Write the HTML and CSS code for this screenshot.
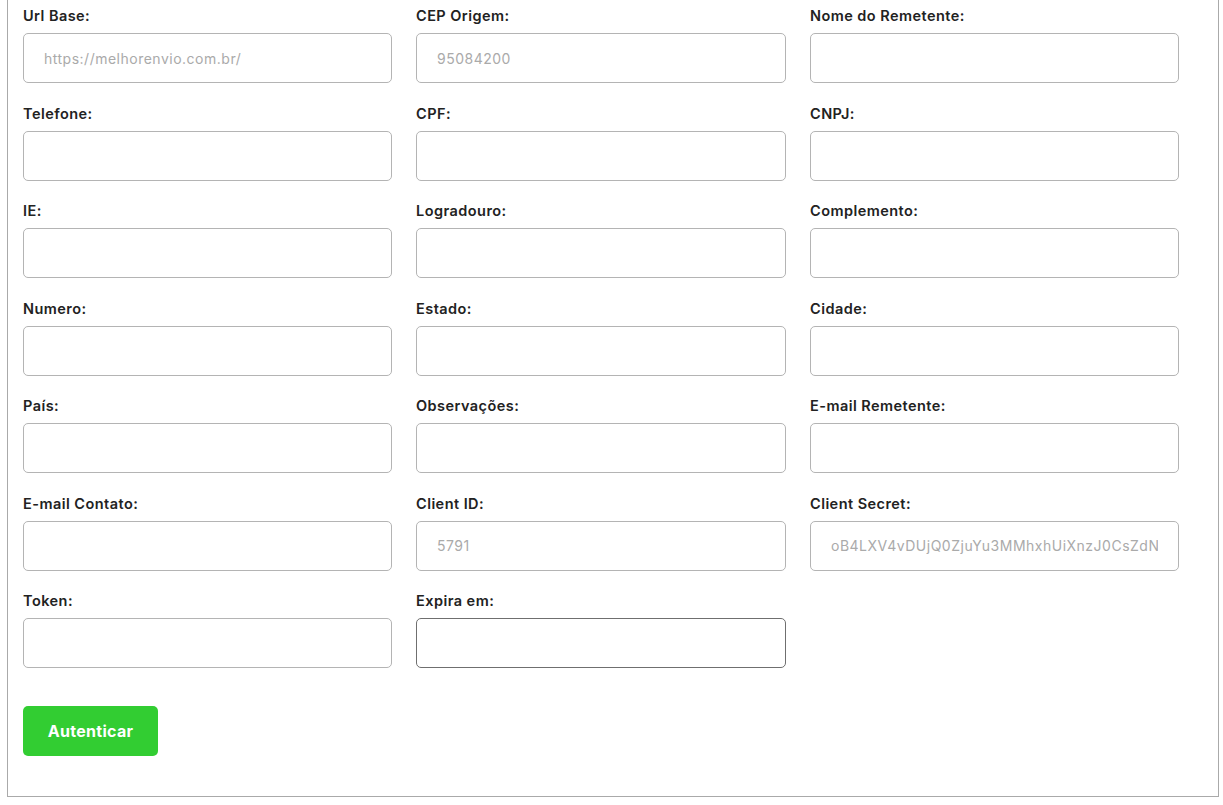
FILE: index.html
```html
<!DOCTYPE html>
<html lang="pt-BR">

<head>
    <meta charset="UTF-8">
    <title>Melhor Envio - Configuração</title>
    <link rel="stylesheet" href="styles.css">
</head>

<body>
    <div class="painel">
        <form class="form-config">
            <div class="campos">
                <div class="campo">
                    <label>Url Base:</label>
                    <input type="text" placeholder="https://melhorenvio.com.br/">
                </div>
                <div class="campo">
                    <label>CEP Origem:</label>
                    <input type="text" placeholder="95084200">
                </div>
                <div class="campo">
                    <label>Nome do Remetente:</label>
                    <input type="text">
                </div>

                <div class="campo">
                    <label>Telefone:</label>
                    <input type="text">
                </div>
                <div class="campo">
                    <label>CPF:</label>
                    <input type="text">
                </div>
                <div class="campo">
                    <label>CNPJ:</label>
                    <input type="text">
                </div>

                <div class="campo">
                    <label>IE:</label>
                    <input type="text">
                </div>
                <div class="campo">
                    <label>Logradouro:</label>
                    <input type="text">
                </div>
                <div class="campo">
                    <label>Complemento:</label>
                    <input type="text">
                </div>

                <div class="campo">
                    <label>Numero:</label>
                    <input type="text">
                </div>
                <div class="campo">
                    <label>Estado:</label>
                    <input type="text">
                </div>
                <div class="campo">
                    <label>Cidade:</label>
                    <input type="text">
                </div>

                <div class="campo">
                    <label>País:</label>
                    <input type="text">
                </div>
                <div class="campo">
                    <label>Observações:</label>
                    <input type="text">
                </div>
                <div class="campo">
                    <label>E-mail Remetente:</label>
                    <input type="text">
                </div>

                <div class="campo">
                    <label>E-mail Contato:</label>
                    <input type="text">
                </div>
                <div class="campo">
                    <label>Client ID:</label>
                    <input type="text" placeholder="5791">
                </div>
                <div class="campo">
                    <label>Client Secret:</label>
                    <input type="text" placeholder="oB4LXV4vDUjQ0ZjuYu3MMhxhUiXnzJ0CsZdNn7ryKq2w">
                </div>

                <div class="campo">
                    <label>Token:</label>
                    <input type="text">
                </div>
                <div class="campo">
                    <label>Expira em:</label>
                    <input type="text" class="ativo">
                </div>
            </div>

            <button type="button" class="btn-autenticar">Autenticar</button>
        </form>
    </div>
</body>

</html>
```

FILE: styles.css
```css
* {
    margin: 0;
    padding: 0;
    box-sizing: border-box;
}

body {
    font-family: "Inter", "Open Sans", sans-serif;
    color: #222;
    background: #fff;
    padding: 0 4px 8px 7px;
}

.painel {
    border: 1px solid #aaa;
    border-top: none;
    padding: 5px 39px 40px 15px;
}

.campos {
    display: grid;
    grid-template-columns: 369px 370px 369px;
    column-gap: 24px;
    row-gap: 19.5px;
}

.campo label {
    display: block;
    font-size: 14.5px;
    font-weight: 600;
    letter-spacing: 0.45px;
    line-height: 21px;
    margin-bottom: 7px;
    color: #222;
}

.campo input {
    display: block;
    width: 100%;
    height: 50px;
    border: 1px solid #b4b4b4;
    border-radius: 5px;
    padding: 0 20px;
    font-family: inherit;
    font-size: 14px;
    letter-spacing: 0.5px;
    color: #555;
    outline: none;
}

.campo input::placeholder {
    color: #aaa;
}

.campo input.ativo {
    border-color: #6f6f6f;
}

.btn-autenticar {
    margin-top: 38px;
    width: 135px;
    height: 50px;
    border: 0;
    border-radius: 5px;
    background: #32cd32;
    color: #fff;
    font-family: inherit;
    font-size: 16px;
    font-weight: 700;
    letter-spacing: 0.3px;
    cursor: pointer;
}
```
